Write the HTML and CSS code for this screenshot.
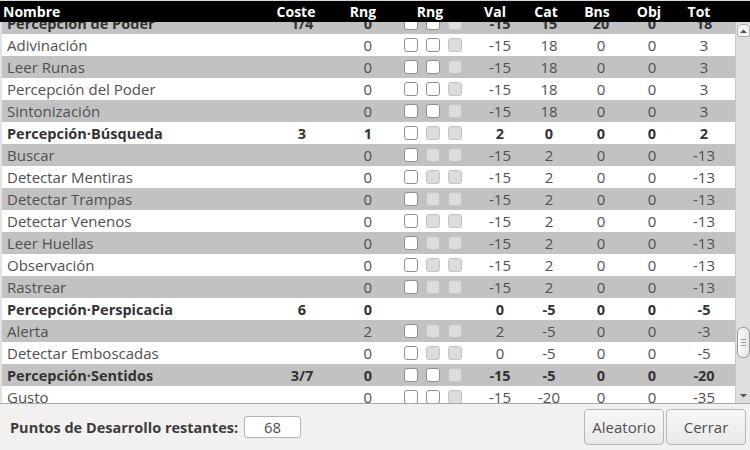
FILE: index.html
```html
<!DOCTYPE html>
<html lang="es">
<head>
<meta charset="utf-8">
<link rel="stylesheet" href="styles.css">
</head>
<body>
<div class="window">
  <div class="tree">
    <div class="head">
      <div class="h h-name">Nombre</div>
      <div class="h">Coste</div>
      <div class="h">Rng</div>
      <div class="h">Rng</div>
      <div class="h">Val</div>
      <div class="h">Cat</div>
      <div class="h">Bns</div>
      <div class="h">Obj</div>
      <div class="h">Tot</div>
    </div>
    <div class="viewport">
      <div class="rows">
        <div class="row grey bold"><span class="name">Percepción de Poder</span><span class="cost">1/4</span><span class="rng">0</span><span class="checks"><i class="cb"></i><i class="cb"></i><i class="cb off"></i></span><span class="num">-15</span><span class="num">15</span><span class="num">20</span><span class="num">0</span><span class="num">18</span></div>
        <div class="row"><span class="name">Adivinación</span><span class="cost"></span><span class="rng">0</span><span class="checks"><i class="cb"></i><i class="cb"></i><i class="cb off"></i></span><span class="num">-15</span><span class="num">18</span><span class="num">0</span><span class="num">0</span><span class="num">3</span></div>
        <div class="row grey"><span class="name">Leer Runas</span><span class="cost"></span><span class="rng">0</span><span class="checks"><i class="cb"></i><i class="cb"></i><i class="cb off"></i></span><span class="num">-15</span><span class="num">18</span><span class="num">0</span><span class="num">0</span><span class="num">3</span></div>
        <div class="row"><span class="name">Percepción del Poder</span><span class="cost"></span><span class="rng">0</span><span class="checks"><i class="cb"></i><i class="cb"></i><i class="cb off"></i></span><span class="num">-15</span><span class="num">18</span><span class="num">0</span><span class="num">0</span><span class="num">3</span></div>
        <div class="row grey"><span class="name">Sintonización</span><span class="cost"></span><span class="rng">0</span><span class="checks"><i class="cb"></i><i class="cb"></i><i class="cb off"></i></span><span class="num">-15</span><span class="num">18</span><span class="num">0</span><span class="num">0</span><span class="num">3</span></div>
        <div class="row bold"><span class="name">Percepción·Búsqueda</span><span class="cost">3</span><span class="rng">1</span><span class="checks"><i class="cb"></i><i class="cb off"></i><i class="cb off"></i></span><span class="num">2</span><span class="num">0</span><span class="num">0</span><span class="num">0</span><span class="num">2</span></div>
        <div class="row grey"><span class="name">Buscar</span><span class="cost"></span><span class="rng">0</span><span class="checks"><i class="cb"></i><i class="cb off"></i><i class="cb off"></i></span><span class="num">-15</span><span class="num">2</span><span class="num">0</span><span class="num">0</span><span class="num">-13</span></div>
        <div class="row"><span class="name">Detectar Mentiras</span><span class="cost"></span><span class="rng">0</span><span class="checks"><i class="cb"></i><i class="cb off"></i><i class="cb off"></i></span><span class="num">-15</span><span class="num">2</span><span class="num">0</span><span class="num">0</span><span class="num">-13</span></div>
        <div class="row grey"><span class="name">Detectar Trampas</span><span class="cost"></span><span class="rng">0</span><span class="checks"><i class="cb"></i><i class="cb off"></i><i class="cb off"></i></span><span class="num">-15</span><span class="num">2</span><span class="num">0</span><span class="num">0</span><span class="num">-13</span></div>
        <div class="row"><span class="name">Detectar Venenos</span><span class="cost"></span><span class="rng">0</span><span class="checks"><i class="cb"></i><i class="cb off"></i><i class="cb off"></i></span><span class="num">-15</span><span class="num">2</span><span class="num">0</span><span class="num">0</span><span class="num">-13</span></div>
        <div class="row grey"><span class="name">Leer Huellas</span><span class="cost"></span><span class="rng">0</span><span class="checks"><i class="cb"></i><i class="cb off"></i><i class="cb off"></i></span><span class="num">-15</span><span class="num">2</span><span class="num">0</span><span class="num">0</span><span class="num">-13</span></div>
        <div class="row"><span class="name">Observación</span><span class="cost"></span><span class="rng">0</span><span class="checks"><i class="cb"></i><i class="cb off"></i><i class="cb off"></i></span><span class="num">-15</span><span class="num">2</span><span class="num">0</span><span class="num">0</span><span class="num">-13</span></div>
        <div class="row grey"><span class="name">Rastrear</span><span class="cost"></span><span class="rng">0</span><span class="checks"><i class="cb"></i><i class="cb off"></i><i class="cb off"></i></span><span class="num">-15</span><span class="num">2</span><span class="num">0</span><span class="num">0</span><span class="num">-13</span></div>
        <div class="row bold"><span class="name">Percepción·Perspicacia</span><span class="cost">6</span><span class="rng">0</span><span class="checks"></span><span class="num">0</span><span class="num">-5</span><span class="num">0</span><span class="num">0</span><span class="num">-5</span></div>
        <div class="row grey"><span class="name">Alerta</span><span class="cost"></span><span class="rng">2</span><span class="checks"><i class="cb"></i><i class="cb off"></i><i class="cb off"></i></span><span class="num">2</span><span class="num">-5</span><span class="num">0</span><span class="num">0</span><span class="num">-3</span></div>
        <div class="row"><span class="name">Detectar Emboscadas</span><span class="cost"></span><span class="rng">0</span><span class="checks"><i class="cb"></i><i class="cb off"></i><i class="cb off"></i></span><span class="num">0</span><span class="num">-5</span><span class="num">0</span><span class="num">0</span><span class="num">-5</span></div>
        <div class="row grey bold"><span class="name">Percepción·Sentidos</span><span class="cost">3/7</span><span class="rng">0</span><span class="checks"><i class="cb"></i><i class="cb"></i><i class="cb off"></i></span><span class="num">-15</span><span class="num">-5</span><span class="num">0</span><span class="num">0</span><span class="num">-20</span></div>
        <div class="row"><span class="name">Gusto</span><span class="cost"></span><span class="rng">0</span><span class="checks"><i class="cb"></i><i class="cb"></i><i class="cb off"></i></span><span class="num">-15</span><span class="num">-20</span><span class="num">0</span><span class="num">0</span><span class="num">-35</span></div>
      </div>
      <div class="scrollbar">
        <div class="arrow up">
          <svg width="9" height="6" viewBox="0 0 9 6"><path d="M1 5 L4.5 1.5 L8 5 Z" fill="#555"/></svg>
        </div>
        <div class="track">
          <div class="thumb"><span></span><span></span><span></span></div>
        </div>
        <div class="arrow down">
          <svg width="9" height="6" viewBox="0 0 9 6"><path d="M1 1 L4.5 4.5 L8 1 Z" fill="#555"/></svg>
        </div>
      </div>
    </div>
  </div>
  <div class="footer">
    <span class="label">Puntos de Desarrollo restantes:</span>
    <span class="entry">68</span>
    <span class="spacer"></span>
    <button class="btn">Aleatorio</button>
    <button class="btn">Cerrar</button>
  </div>
</div>
</body>
</html>
```

FILE: styles.css
```css
* { box-sizing: border-box; }
html, body {
  margin: 0;
  padding: 0;
  width: 750px;
  height: 450px;
  overflow: hidden;
  background: #f2f1f0;
  font-family: "Open Sans", "DejaVu Sans", sans-serif;
  font-size: 14px;
}
.window {
  display: flex;
  flex-direction: column;
  height: 450px;
}
.tree {
  height: 404px;
  display: flex;
  flex-direction: column;
  background: #fff;
  border-top: 1px solid #d8d8d8;
  border-bottom: 1px solid #a8a8a8;
}
.head {
  height: 21px;
  background: #000;
  color: #fff;
  font-weight: 700;
  display: grid;
  grid-template-columns: 268px 56px 78px 56px 74px 28px 74px 30px 70px 1fr;
  align-items: center;
  line-height: 21px;
}
.h { text-align: center; white-space: nowrap; }
.h-name { text-align: left; padding-left: 3px; }
.viewport {
  flex: 1;
  display: flex;
  overflow: hidden;
  min-height: 0;
}
.rows {
  flex: 1;
  margin-top: -10px;
  border-left: 2px solid #e2e2e2;
}
.row {
  height: 22px;
  display: grid;
  grid-template-columns: 266px 68px 40px 102px 44px 54px 50px 52px 52px 1fr;
  align-items: center;
  color: #505050;
  font-weight: 400;
  font-size: 15px;
  background: #fff;
  white-space: nowrap;
}
.row.grey { background: #c2c2c2; }
.row.bold { font-weight: 700; color: #333; font-size: 14.5px; }
.name { padding-left: 5px; }
.cost { text-align: center; }
.rng { text-align: right; padding-right: 4px; }
.num { text-align: center; }
.checks {
  display: flex;
  gap: 8px;
  padding-left: 28px;
  align-items: center;
}
.cb {
  display: block;
  width: 14px;
  height: 14px;
  border: 1px solid #8f8f8f;
  border-radius: 3px;
  background: #fff;
}
.cb.off {
  background: #dcdcdc;
  border-color: #c4c4c4;
}
.scrollbar {
  width: 15px;
  background: #dedede;
  border-left: 1px solid #c8c8c8;
  display: flex;
  flex-direction: column;
  align-items: center;
}
.arrow {
  width: 13px;
  height: 13px;
  display: flex;
  align-items: center;
  justify-content: center;
}
.arrow.up {
  margin-top: 2px;
  border: 1px solid #b0b0b0;
  border-radius: 5px 5px 2px 2px;
  background: #f4f4f4;
}
.arrow.down { margin-bottom: 1px; }
.track {
  flex: 1;
  width: 13px;
  padding-top: 290px;
}
.thumb {
  width: 13px;
  height: 31px;
  border: 1px solid #9a9a9a;
  border-radius: 6px;
  background: linear-gradient(to right, #fbfbfb, #e6e6e6);
  display: flex;
  flex-direction: column;
  align-items: center;
  justify-content: center;
  gap: 2px;
}
.thumb span {
  display: block;
  width: 5px;
  height: 1px;
  background: #9a9a9a;
}
.footer {
  flex: 1;
  display: flex;
  align-items: center;
  padding: 0 4px 0 10px;
  background: #f2f1f0;
}
.label {
  font-weight: 700;
  font-size: 14.5px;
  color: #3c3c3c;
  margin-right: 6px;
}
.entry {
  width: 57px;
  height: 22px;
  border: 1px solid #b5b5b5;
  border-radius: 3px;
  background: #fff;
  text-align: center;
  line-height: 20px;
  color: #505050;
  font-size: 15px;
}
.spacer { flex: 1; }
.btn {
  width: 80px;
  height: 36px;
  margin-left: 2px;
  border: 1px solid #b8b8b8;
  border-radius: 4px;
  background: linear-gradient(#f7f7f7, #e9e9e9);
  font-family: inherit;
  font-size: 15px;
  color: #505050;
  padding: 0;
}
```
